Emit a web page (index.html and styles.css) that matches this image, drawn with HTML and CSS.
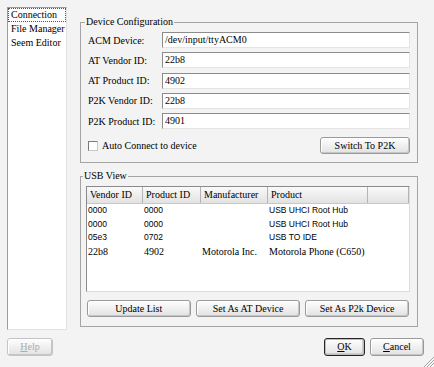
FILE: index.html
```html
<!DOCTYPE html>
<html>
<head>
<meta charset="utf-8">
<link rel="stylesheet" href="styles.css">
</head>
<body>
<div class="dialog">
  <div class="main">
    <ul class="nav">
      <li class="active">Connection</li>
      <li>File Manager</li>
      <li>Seem Editor</li>
    </ul>
    <div class="pane">
      <fieldset class="group cfg">
        <legend>Device Configuration</legend>
        <div class="rows">
          <div class="field"><label>ACM Device:</label><div class="input">/dev/input/ttyACM0</div></div>
          <div class="field"><label>AT Vendor ID:</label><div class="input">22b8</div></div>
          <div class="field"><label>AT Product ID:</label><div class="input">4902</div></div>
          <div class="field"><label>P2K Vendor ID:</label><div class="input">22b8</div></div>
          <div class="field"><label>P2K Product ID:</label><div class="input">4901</div></div>
        </div>
        <div class="cfg-foot">
          <label class="check"><span class="box"></span>Auto Connect to device</label>
          <button class="btn switch">Switch To P2K</button>
        </div>
      </fieldset>
      <fieldset class="group usb">
        <legend>USB View</legend>
        <div class="list">
          <div class="thead">
            <span>Vendor ID</span><span>Product ID</span><span>Manufacturer</span><span>Product</span><span></span>
          </div>
          <div class="row sans"><span>0000</span><span>0000</span><span></span><span>USB UHCI Root Hub</span><span></span></div>
          <div class="row sans"><span>0000</span><span>0000</span><span></span><span>USB UHCI Root Hub</span><span></span></div>
          <div class="row sans"><span>05e3</span><span>0702</span><span></span><span>USB TO IDE</span><span></span></div>
          <div class="row"><span>22b8</span><span>4902</span><span>Motorola Inc.</span><span>Motorola Phone (C650)</span><span></span></div>
        </div>
        <div class="actions">
          <button class="btn">Update List</button>
          <button class="btn">Set As AT Device</button>
          <button class="btn">Set As P2k Device</button>
        </div>
      </fieldset>
    </div>
  </div>
  <div class="footer">
    <button class="btn help" disabled><u>H</u>elp</button>
    <div class="spacer"></div>
    <button class="btn ok"><u>O</u>K</button>
    <button class="btn cancel"><u>C</u>ancel</button>
  </div>
  <svg class="grip" width="11" height="11" viewBox="0 0 11 11">
    <line x1="11" y1="1" x2="1" y2="11" stroke="#a0a0a0" stroke-width="1"/>
    <line x1="11" y1="4" x2="4" y2="11" stroke="#a0a0a0" stroke-width="1"/>
    <line x1="11" y1="7" x2="7" y2="11" stroke="#a0a0a0" stroke-width="1"/>
    <line x1="11" y1="2" x2="2" y2="11" stroke="#ffffff" stroke-width="1"/>
    <line x1="11" y1="5" x2="5" y2="11" stroke="#ffffff" stroke-width="1"/>
    <line x1="11" y1="8" x2="8" y2="11" stroke="#ffffff" stroke-width="1"/>
  </svg>
</div>
</body>
</html>
```
FILE: styles.css
```css
* { box-sizing: border-box; }
html, body { margin: 0; padding: 0; }
body {
  background: #f3f3f3;
  font-family: "Liberation Serif", "Times New Roman", serif;
  font-size: 10px;
  color: #000;
  width: 434px;
  height: 367px;
  overflow: hidden;
}
.dialog {
  position: relative;
  height: 367px;
  padding: 7px 10px 0 7px;
}
.main { display: flex; align-items: flex-start; }

.nav {
  list-style: none;
  margin: 0;
  padding: 0;
  width: 60px;
  height: 323px;
  background: #fff;
  border: 1px solid;
  border-color: #9c9c9c #e2e2e2 #e2e2e2 #9c9c9c;
}
.nav li {
  height: 14px;
  line-height: 12px;
  padding-left: 2px;
  border: 1px dotted transparent;
  white-space: nowrap;
}
.nav li.active { border-color: #555; }

.pane { margin-left: 13px; width: 338px; }

.group {
  margin: 0;
  min-width: 0;
  border: 1px solid #a4a4a4;
}
.group legend {
  padding: 0 1px;
  margin-left: -3px;
  line-height: 12px;
  font-size: 10px;
}
.cfg { margin-top: 9px; padding: 4px 7px 8px 7px; }
.rows { display: flex; flex-direction: column; gap: 4.25px; }
.field { display: flex; align-items: center; height: 16px; }
.field label { width: 74px; white-space: nowrap; }
.input {
  flex: 1;
  height: 16px;
  background: #fff;
  border: 1px solid;
  border-color: #8c8c8c #e4e4e4 #e4e4e4 #8c8c8c;
  padding: 0 2px;
  line-height: 14px;
}
.cfg-foot {
  display: flex;
  align-items: center;
  justify-content: space-between;
  margin-top: 8px;
}
.check { display: flex; align-items: center; gap: 4px; }
.box {
  width: 10px;
  height: 10px;
  border: 1px solid;
  border-color: #7a7a7a #c8c8c8 #c8c8c8 #7a7a7a;
  background: #fff;
}

.btn {
  font: inherit;
  color: #000;
  height: 17px;
  padding: 0;
  line-height: 15px;
  background: linear-gradient(#fefefe, #e2e2e2);
  border: 1px solid #9a9a9a;
  border-radius: 3px;
  box-shadow: inset -1px -1px 0 #c6c6c6, inset 1px 1px 0 #fff;
}
.switch { width: 90px; }

.usb { margin-top: 7px; padding: 4px 7px 9px 5px; }
.list {
  height: 106px;
  background: #fff;
  border: 1px solid;
  border-color: #8a8a8a #dcdcdc #dcdcdc #8a8a8a;
}
.thead, .row {
  display: grid;
  grid-template-columns: 56px 58px 67px 100px 1fr;
}
.thead {
  height: 17px;
  background: linear-gradient(#fafafa, #e2e2e2);
  border-bottom: 1px solid #c8c8c8;
}
.thead span {
  border-right: 1px solid #b4b4b4;
  padding-left: 3px;
  line-height: 16px;
  white-space: nowrap;
}
.row { height: 13.5px; line-height: 13.5px; }
.row span { padding-left: 1px; white-space: nowrap; }
.row.sans {
  font-family: "Liberation Sans", Arial, sans-serif;
  font-size: 8.5px;
}
.actions { display: flex; gap: 5.5px; margin-top: 8px; padding: 0 1px; }
.actions .btn { flex: 1; }

.footer {
  display: flex;
  align-items: center;
  gap: 5px;
  margin-top: 8px;
}
.spacer { flex: 1; }
.footer .btn { height: 18px; line-height: 16px; }
.help {
  width: 46px;
  color: #ababab;
  border-color: #c4c4c4;
}
.ok {
  width: 41px;
  border: 1px solid #262626;
  box-shadow: inset 0 0 0 1px #bcbcbc, inset -2px -2px 0 #cfcfcf;
}
.cancel { width: 54px; }
.grip { position: absolute; right: 0; bottom: 0; }
```
